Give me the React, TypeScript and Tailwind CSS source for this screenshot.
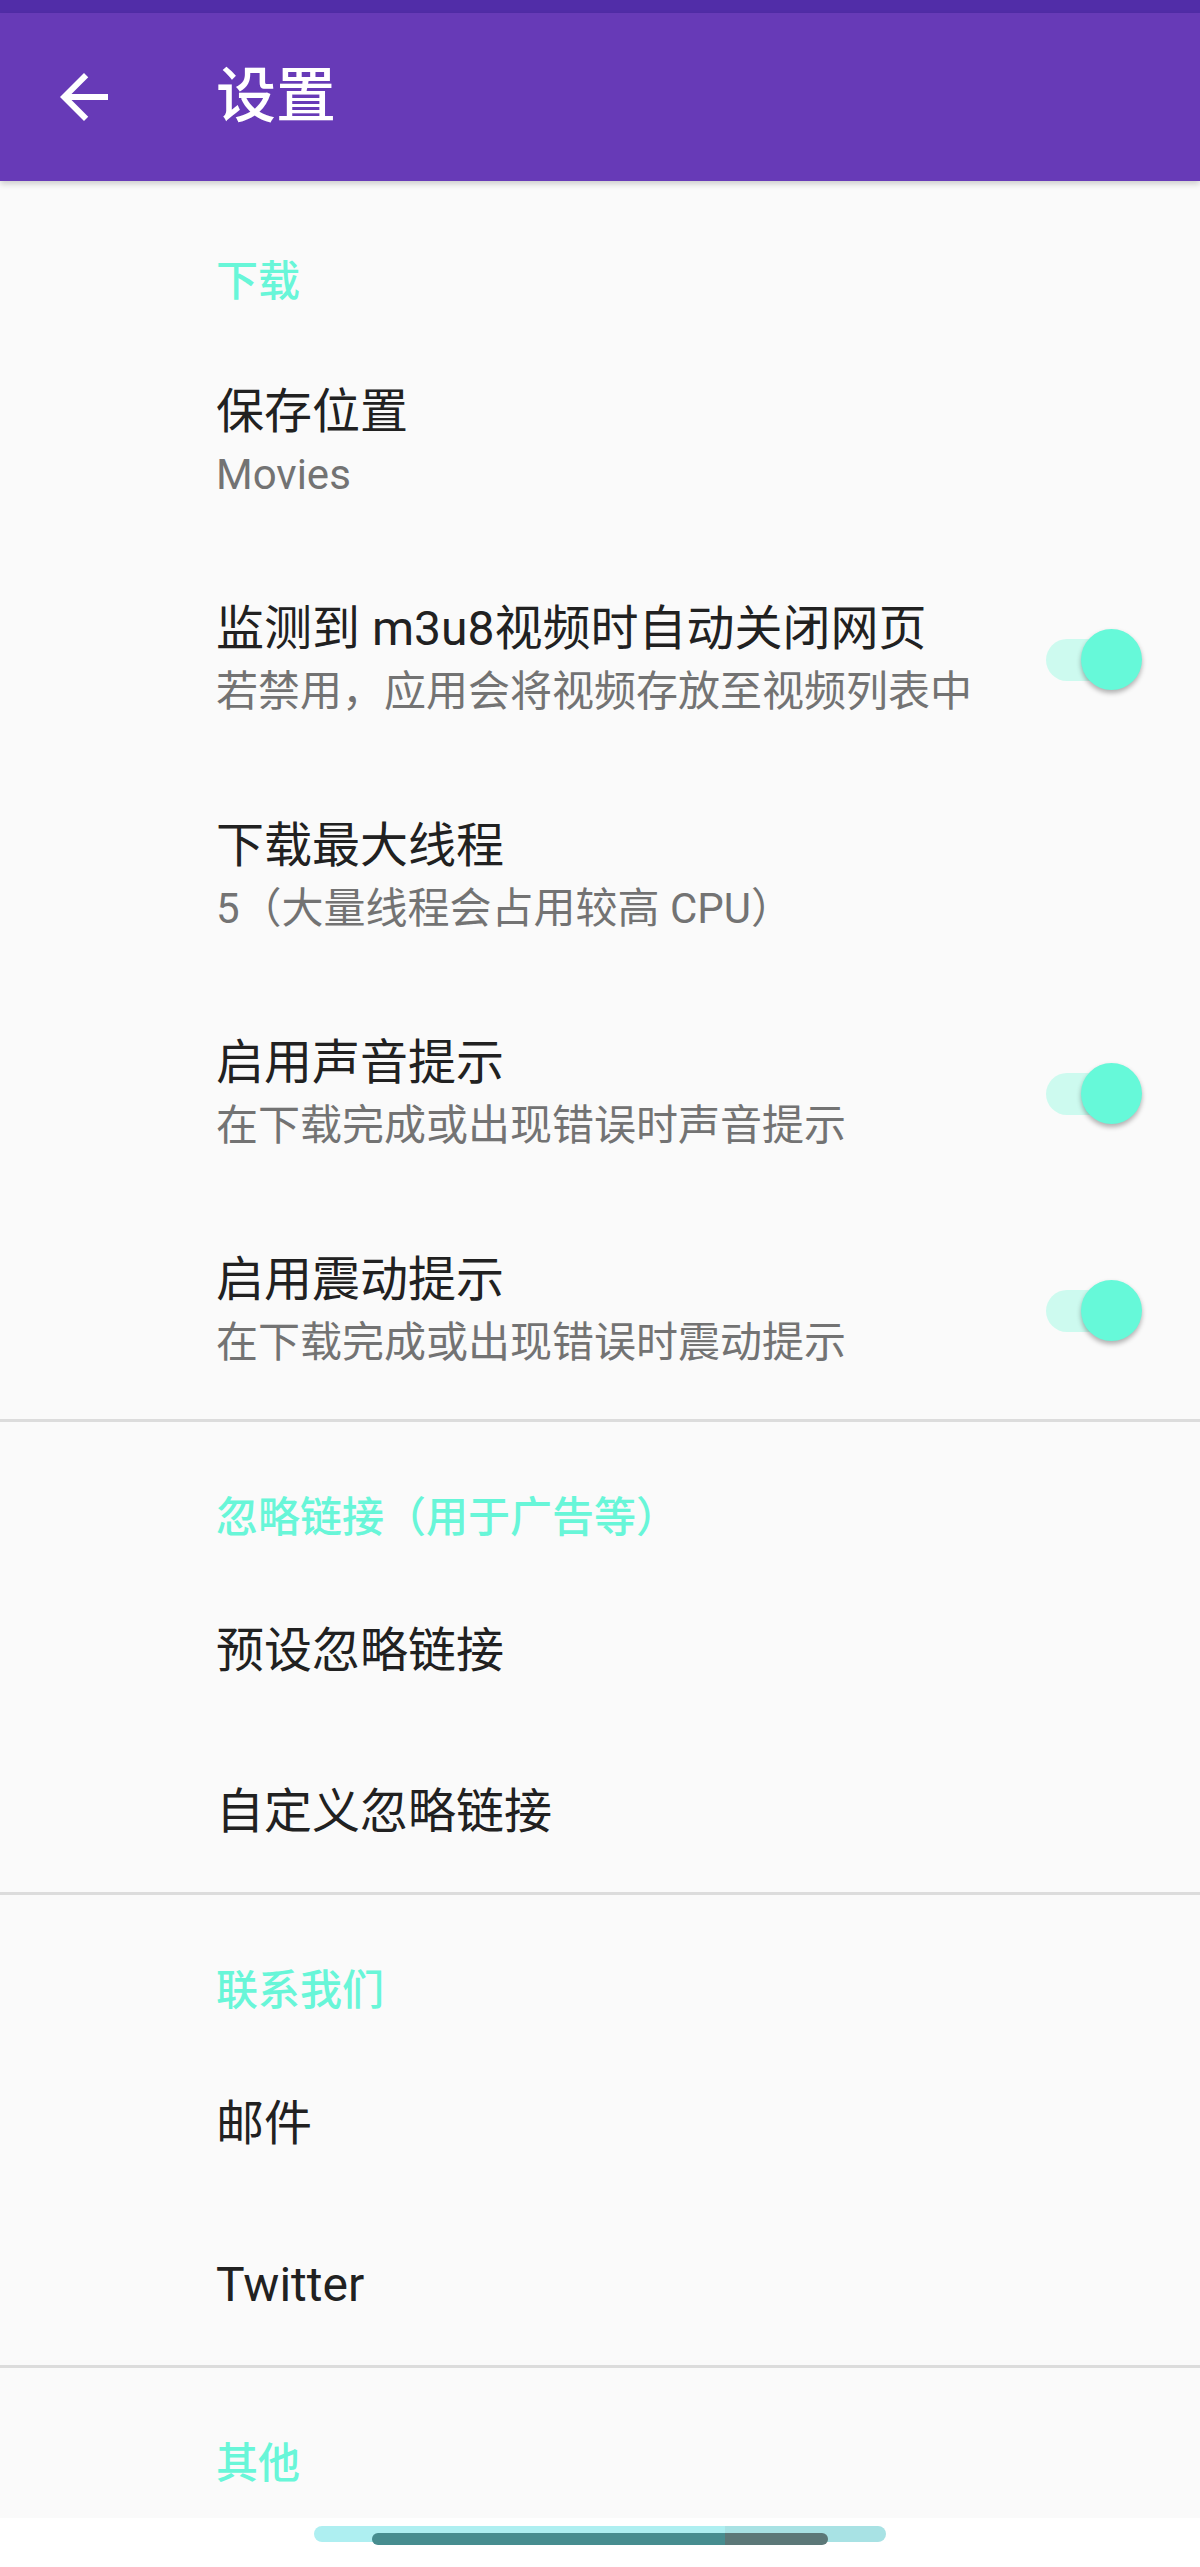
import React from 'react';

const FONT = { fontFamily: 'Roboto, "Noto Sans CJK SC", "Noto Sans", sans-serif' };

type Item = {
  title: string;
  summary?: string;
  toggle?: boolean;
};

type Section = {
  header: string;
  items: Item[];
  divider: boolean;
};

const sections: Section[] = [
  {
    header: '下载',
    divider: true,
    items: [
      { title: '保存位置', summary: 'Movies' },
      { title: '监测到 m3u8视频时自动关闭网页', summary: '若禁用，应用会将视频存放至视频列表中', toggle: true },
      { title: '下载最大线程', summary: '5（大量线程会占用较高 CPU）' },
      { title: '启用声音提示', summary: '在下载完成或出现错误时声音提示', toggle: true },
      { title: '启用震动提示', summary: '在下载完成或出现错误时震动提示', toggle: true },
    ],
  },
  {
    header: '忽略链接（用于广告等）',
    divider: true,
    items: [{ title: '预设忽略链接' }, { title: '自定义忽略链接' }],
  },
  {
    header: '联系我们',
    divider: true,
    items: [{ title: '邮件' }, { title: 'Twitter' }],
  },
  {
    header: '其他',
    divider: false,
    items: [],
  },
];

const Toggle: React.FC = () => (
  <div className="relative w-[96px] h-[61px] shrink-0">
    {/* track */}
    <div className="absolute left-0 top-[10px] w-[90px] h-[42px] rounded-full bg-[#cdfaef]" />
    {/* thumb */}
    <div className="absolute right-0 top-0 w-[61px] h-[61px] rounded-full bg-[#66f9d9] shadow-[0_3px_5px_rgba(0,0,0,0.3)]" />
  </div>
);

const PrefRow: React.FC<{ item: Item }> = ({ item }) => {
  if (!item.summary) {
    return (
      <div className="pl-[216px] pr-[58px] py-[48px]">
        <div className="text-[48px] leading-[65px] text-[#212121]">{item.title}</div>
      </div>
    );
  }
  return (
    <div className="flex items-center pl-[216px] pr-[58px]">
      <div className="flex-1 min-w-0 pt-[46px] pb-[45px]">
        <div className="text-[48px] leading-[64px] text-[#212121] whitespace-nowrap">{item.title}</div>
        <div className="text-[42px] leading-[62px] text-[#737373] whitespace-nowrap">{item.summary}</div>
      </div>
      {item.toggle && <Toggle />}
    </div>
  );
};

export default function App() {
  return (
    <div className="w-[1200px] h-[2567px] bg-white flex flex-col overflow-hidden" style={FONT}>
      {/* Status bar */}
      <div className="h-[13px] bg-[#512da8] shrink-0" />

      {/* App bar */}
      <div className="h-[168px] bg-[#673ab7] flex items-center shrink-0 relative z-10 shadow-[0_3px_6px_rgba(0,0,0,0.18)]">
        <div className="w-[72px] h-[72px] ml-[48px] flex items-center justify-center">
          <svg viewBox="0 0 24 24" className="w-[72px] h-[72px]" fill="#ffffff">
            <path d="M20 11H7.83l5.59-5.59L12 4l-8 8 8 8 1.41-1.41L7.83 13H20v-2z" />
          </svg>
        </div>
        <div className="ml-[96px] text-[60px] leading-none text-white font-medium">设置</div>
      </div>

      {/* Preference list */}
      <div className="flex-1 bg-[#fafafa] pt-[5px]">
        {sections.map((s) => (
          <div key={s.header}>
            <div className="pl-[216px] pt-[72px] pb-[28px] text-[42px] leading-[48px] font-medium text-[#68f6d8]">
              {s.header}
            </div>
            {s.items.map((it) => (
              <PrefRow key={it.title} item={it} />
            ))}
            {s.divider && <div className="h-[3px] bg-[#dcdcdc]" />}
          </div>
        ))}
      </div>

      {/* Gesture nav area */}
      <div className="h-[49px] bg-white shrink-0 relative">
        <div className="absolute left-[314px] top-[8px] w-[572px] h-[16px] rounded-full overflow-hidden flex">
          <div className="w-[411px] bg-[#aeeff1]" />
          <div className="flex-1 bg-[#a8e2e4]" />
        </div>
        <div className="absolute left-[372px] top-[15px] w-[456px] h-[12px] rounded-full overflow-hidden flex">
          <div className="w-[353px] bg-[#478d8f]" />
          <div className="flex-1 bg-[#5c7878]" />
        </div>
      </div>
    </div>
  );
}
